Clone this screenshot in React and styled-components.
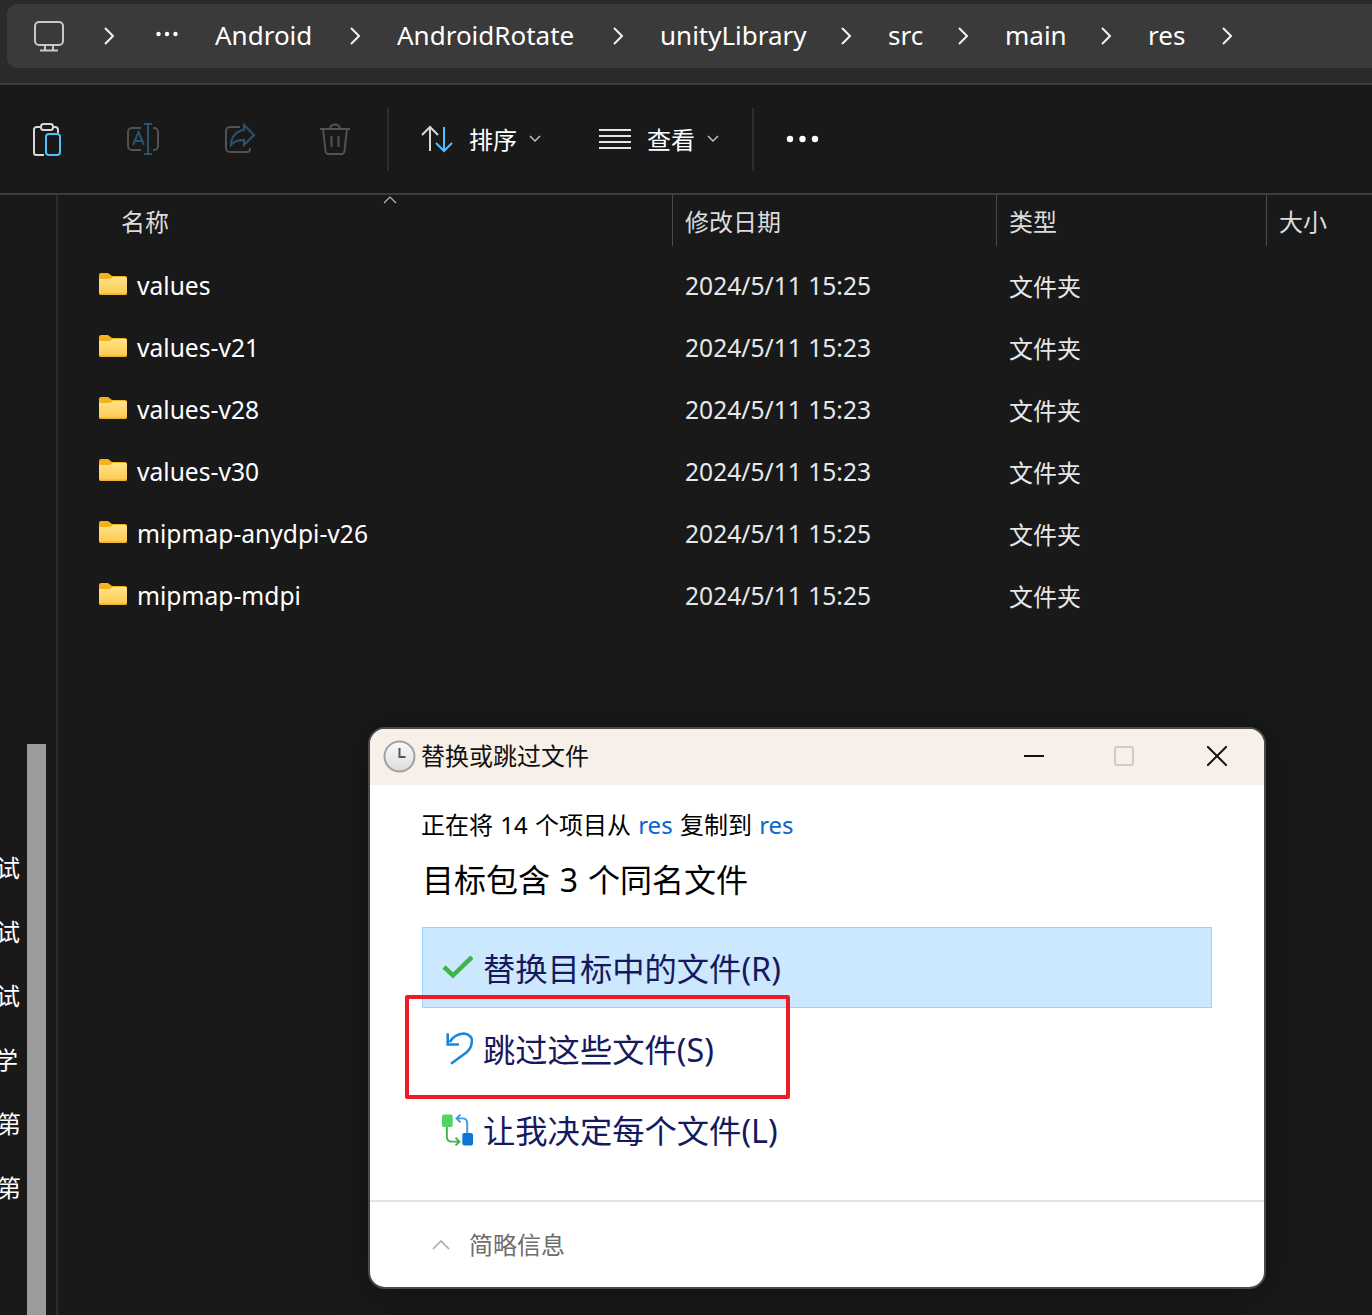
import React from 'react'
import styled, { createGlobalStyle } from 'styled-components'

const GlobalStyle = createGlobalStyle`
  html, body { margin: 0; padding: 0; background: #191919; }
  body { font-family: "Noto Sans", "Noto Sans CJK SC", sans-serif; }
`

const Page = styled.div`
  position: relative;
  width: 1372px;
  height: 1315px;
  overflow: hidden;
  background: #191919;
  display: flex;
  flex-direction: column;
`

const TopBand = styled.div`
  height: 85px;
  box-sizing: border-box;
  padding: 4px 0 15px 7px;
  background: #2b2b2b;
  border-bottom: 2px solid #3c3c3c;
`

const Breadcrumb = styled.div`
  height: 64px;
  border-radius: 10px 0 0 10px;
  background: #3a3a3a;
  display: flex;
  align-items: center;
  padding-left: 26px;
  color: #fff;
  font-size: 26px;
  white-space: nowrap;
`

const MonitorIcon = styled.svg`
  margin-right: 39px;
`

const Dots = styled.svg`
  margin: -5px 37px 0 42px;
`

const Crumb = styled.span`
  width: ${p => p.$w}px;
  margin: 0 36px 2px ${p => (p.$first ? 0 : 37)}px;
  line-height: 62px;
`

const Toolbar = styled.div`
  height: 110px;
  flex: none;
  box-sizing: border-box;
  border-bottom: 2px solid #3c3c3c;
  display: flex;
  align-items: center;
  color: #fff;
  font-size: 24px;
`

const ToolIcon = styled.div`
  width: 96px;
  display: flex;
  justify-content: center;
  &:first-child { margin-left: -1px; }
`

const ToolSep = styled.div`
  width: 2px;
  height: 63px;
  margin: 0 32px 0 ${p => p.$left}px;
  background: #2e2e2e;
`

const ToolMenu = styled.div`
  display: flex;
  align-items: center;
  margin-right: ${p => p.$right}px;
`

const MenuLabel = styled.span`
  margin: 2px 12px 0 16px;
  line-height: 32px;
`

const Body = styled.div`
  flex: 1;
  display: flex;
  min-height: 0;
`

const Sidebar = styled.aside`
  position: relative;
  width: 56px;
  flex: none;
  border-right: 2px solid #2b2b2b;
  padding-top: 657px;
  color: #fff;
  font-size: 24px;
`

const SideLabel = styled.div`
  width: 20px;
  height: 64px;
  line-height: 32px;
  overflow: hidden;
  white-space: nowrap;
  text-indent: ${p => p.$indent}px;
`

const ScrollThumb = styled.div`
  position: absolute;
  left: 27px;
  top: 549px;
  bottom: 0;
  width: 19px;
  background: #9b9b9b;
`

const Files = styled.main`
  flex: 1;
  min-width: 0;
`

const HeaderRow = styled.div`
  position: relative;
  height: 51px;
  margin-bottom: 8px;
  display: grid;
  grid-template-columns: 615px 324px 270px 1fr;
`

const HeaderCell = styled.div`
  height: 51px;
  box-sizing: border-box;
  padding-left: ${p => p.$pad}px;
  line-height: 54px;
  color: #dcdcdc;
  font-size: 24px;
  border-right: ${p => (p.$last ? 'none' : '1px solid #4a4a4a')};
`

const SortCaret = styled.svg`
  position: absolute;
  left: 325px;
  top: 0;
`

const FileRow = styled.div`
  height: 62px;
  display: grid;
  grid-template-columns: 615px 324px 1fr;
  align-items: center;
  font-size: 24.6px;
  color: #e8e8e8;
`

const NameCell = styled.div`
  display: flex;
  align-items: center;
  gap: 10px;
  padding-left: 41px;
  color: #fff;
`

const FolderIcon = styled.svg`
  margin-bottom: 2px;
`

const DateCell = styled.div`
  padding-left: 12px;
`

const TypeCell = styled.div`
  padding-left: 12px;
  font-size: 24px;
`

const Dialog = styled.section`
  position: absolute;
  left: 368px;
  top: 727px;
  width: 898px;
  height: 562px;
  box-sizing: border-box;
  border: 2px solid #4a4a4a;
  border-radius: 17px;
  background: #fff;
  overflow: hidden;
  display: flex;
  flex-direction: column;
  color: #000;
  box-shadow: 0 4px 40px rgba(0, 0, 0, 0.35);
`

const TitleBar = styled.header`
  height: 56px;
  flex: none;
  box-sizing: border-box;
  display: flex;
  align-items: center;
  padding: 0 1px 2px 13px;
  background: #f7f0e9;
  font-size: 24px;
  color: #111;
`

const TitleText = styled.span`
  margin: 0 0 3px 5px;
  flex: 1;
`

const WinButton = styled.div`
  width: ${p => p.$w}px;
  display: flex;
  justify-content: center;
`

const Content = styled.div`
  flex: 1;
  padding: 21px 52px 0 52px;
`

const Progress = styled.div`
  margin-left: -1px;
  font-size: 24px;
  line-height: 38px;
  word-spacing: 1px;
`

const Link = styled.span`
  color: #0a66c8;
`

const Heading = styled.h1`
  margin: 14px 0 25px 0;
  font-size: 32px;
  font-weight: 400;
  line-height: 44px;
  word-spacing: 1.5px;
`

const Option = styled.div`
  height: 81px;
  box-sizing: border-box;
  display: flex;
  align-items: center;
  gap: 10px;
  padding-left: 19px;
  font-size: 32.3px;
  color: #17195e;
  background: ${p => (p.$active ? '#cce8ff' : 'transparent')};
  border: 1px solid ${p => (p.$active ? '#99d1ff' : 'transparent')};
`

const OptionText = styled.span`
  margin-bottom: 2px;
`

const Footer = styled.footer`
  height: 87px;
  flex: none;
  box-sizing: border-box;
  border-top: 2px solid #e3e3e3;
  display: flex;
  align-items: center;
  gap: 19px;
  padding-left: 62px;
  font-size: 24px;
  color: #6d6d6d;
`

const FooterText = styled.span`
  margin-bottom: 3px;
`

const Highlight = styled.div`
  position: absolute;
  left: 405px;
  top: 995px;
  width: 385px;
  height: 104px;
  box-sizing: border-box;
  border: 4px solid #ed1c24;
  border-radius: 2px;
`

const Chevron = () => (
  <svg width="10" height="18" viewBox="0 0 10 18" fill="none" stroke="#f2f2f2" strokeWidth="2">
    <path d="M1 1l8 8-8 8" />
  </svg>
)

const Caret = ({ color = '#c8c8c8' }) => (
  <svg width="12" height="8" viewBox="0 0 12 8" fill="none" stroke={color} strokeWidth="1.4">
    <path d="M1 1l5 5 5-5" />
  </svg>
)

const Folder = ({ id }) => (
  <FolderIcon width="28" height="22" viewBox="0 0 28 22">
    <defs>
      <linearGradient id={id} x1="0" y1="0" x2="0" y2="1">
        <stop offset="0" stopColor="#ffe38c" />
        <stop offset="1" stopColor="#fcca4e" />
      </linearGradient>
    </defs>
    <path d="M0 2a2 2 0 0 1 2-2h7l4 3h13a2 2 0 0 1 2 2v3H0z" fill="#f5b21b" />
    <path d="M0 6h11l3-2h12a2 2 0 0 1 2 2v14a2 2 0 0 1-2 2H2a2 2 0 0 1-2-2z" fill={`url(#${id})`} />
    <path d="M0 20.500h28a2 2 0 0 1-2 1.500H2a2 2 0 0 1-2-1.500z" fill="#eeb22e" />
  </FolderIcon>
)

const files = [
  { name: 'values', date: '2024/5/11 15:25' },
  { name: 'values-v21', date: '2024/5/11 15:23' },
  { name: 'values-v28', date: '2024/5/11 15:23' },
  { name: 'values-v30', date: '2024/5/11 15:23' },
  { name: 'mipmap-anydpi-v26', date: '2024/5/11 15:25' },
  { name: 'mipmap-mdpi', date: '2024/5/11 15:25' },
]

const crumbs = [
  { label: 'Android', width: 99 },
  { label: 'AndroidRotate', width: 180 },
  { label: 'unityLibrary', width: 145 },
  { label: 'src', width: 34 },
  { label: 'main', width: 60 },
  { label: 'res', width: 38 },
]

export default function App() {
  return (
    <Page>
      <GlobalStyle />
      <TopBand>
        <Breadcrumb>
          <MonitorIcon width="32" height="32" viewBox="0 0 32 32" fill="none" stroke="#c8c8c8" strokeWidth="2">
            <rect x="2" y="2" width="28" height="23" rx="4" />
            <path d="M12 25v5M20 25v5M7 30.500h18" />
          </MonitorIcon>
          <Chevron />
          <Dots width="22" height="6" viewBox="0 0 22 6" fill="#fff">
            <circle cx="2.500" cy="3" r="2.200" />
            <circle cx="11" cy="3" r="2.200" />
            <circle cx="19.500" cy="3" r="2.200" />
          </Dots>
          {crumbs.map((crumb, i) => (
            <React.Fragment key={crumb.label}>
              <Crumb $first={i === 0} $w={crumb.width}>{crumb.label}</Crumb>
              <Chevron />
            </React.Fragment>
          ))}
        </Breadcrumb>
      </TopBand>

      <Toolbar>
        <ToolIcon>
          <svg width="32" height="34" viewBox="0 0 32 34" fill="none" strokeWidth="2">
            <path d="M10 5H5.500A2.500 2.500 0 0 0 3 7.500v23A2.500 2.500 0 0 0 5.500 33H13M22 5h2a3 3 0 0 1 3 3v3" stroke="#d8d8d8" />
            <rect x="10" y="2" width="12" height="6" rx="2.500" stroke="#d8d8d8" />
            <rect x="15" y="12" width="14" height="21" rx="3" stroke="#4cc2ff" />
          </svg>
        </ToolIcon>
        <ToolIcon>
          <svg width="32" height="32" viewBox="0 0 32 32" fill="none" strokeWidth="2">
            <path d="M14 5H5a4 4 0 0 0-4 4v14a4 4 0 0 0 4 4h9M26 5h1a4 4 0 0 1 4 4v14a4 4 0 0 1-4 4h-1" stroke="#525252" />
            <path d="M17 1h8M21 1v30M17 31h8" stroke="#28546f" />
            <path d="M6 22L11.500 9 17 22M8 18h7" stroke="#28546f" />
          </svg>
        </ToolIcon>
        <ToolIcon>
          <svg width="32" height="32" viewBox="0 0 32 32" fill="none" strokeWidth="2">
            <path d="M17 4H7a4 4 0 0 0-4 4v17a4 4 0 0 0 4 4h17a3 3 0 0 0 3-3v-1" stroke="#525252" />
            <path d="M21 2l10 10-10 10v-5c-6 0-10 1-13 5 0-8 5-14 13-15z" stroke="#28546f" />
          </svg>
        </ToolIcon>
        <ToolIcon>
          <svg width="32" height="32" viewBox="0 0 32 32" fill="none" stroke="#525252" strokeWidth="2">
            <path d="M1 6h30M11 6c0-6 10-6 10 0M4 6l2.500 22a3 3 0 0 0 3 3h13a3 3 0 0 0 3-3L28 6M12.500 13v11M19.500 13v11" />
          </svg>
        </ToolIcon>
        <ToolSep $left={4} />
        <ToolMenu $right={58}>
          <svg width="32" height="28" viewBox="0 0 32 28" fill="none" strokeWidth="2">
            <path d="M9 26V2M1 10l8-8 8 8" stroke="#d8d8d8" />
            <path d="M23 2v24M15 18l8 8 8-8" stroke="#4cc2ff" />
          </svg>
          <MenuLabel>排序</MenuLabel>
          <Caret />
        </ToolMenu>
        <ToolMenu $right={33}>
          <svg width="32" height="22" viewBox="0 0 32 22" fill="none" stroke="#e4e4e4" strokeWidth="2">
            <path d="M0 2h32M0 8h32M0 14h32M0 20h32" />
          </svg>
          <MenuLabel>查看</MenuLabel>
          <Caret />
        </ToolMenu>
        <ToolSep $left={0} />
        <svg width="33" height="8" viewBox="0 0 33 8" fill="#fff">
          <circle cx="4" cy="4" r="3.200" />
          <circle cx="16.500" cy="4" r="3.200" />
          <circle cx="29" cy="4" r="3.200" />
        </svg>
      </Toolbar>

      <Body>
        <Sidebar>
          <SideLabel $indent={-4}>试</SideLabel>
          <SideLabel $indent={-4}>试</SideLabel>
          <SideLabel $indent={-4}>试</SideLabel>
          <SideLabel $indent={-6}>学习</SideLabel>
          <SideLabel $indent={-3}>第一</SideLabel>
          <SideLabel $indent={-3}>第二</SideLabel>
          <ScrollThumb />
        </Sidebar>
        <Files>
          <HeaderRow>
            <HeaderCell $pad={63}>名称</HeaderCell>
            <HeaderCell $pad={12}>修改日期</HeaderCell>
            <HeaderCell $pad={12}>类型</HeaderCell>
            <HeaderCell $pad={12} $last>大小</HeaderCell>
            <SortCaret width="14" height="9" viewBox="0 0 14 9" fill="none" stroke="#b8b8b8" strokeWidth="1.200">
              <path d="M1 8l6-6 6 6" />
            </SortCaret>
          </HeaderRow>
          {files.map(file => (
            <FileRow key={file.name}>
              <NameCell>
                <Folder id={`folder-${file.name}`} />
                <span>{file.name}</span>
              </NameCell>
              <DateCell>{file.date}</DateCell>
              <TypeCell>文件夹</TypeCell>
            </FileRow>
          ))}
        </Files>
      </Body>

      <Dialog>
        <TitleBar>
          <svg width="33" height="33" viewBox="0 0 33 33">
            <defs>
              <linearGradient id="clockFace" x1="0" y1="0" x2="0" y2="1">
                <stop offset="0" stopColor="#fafafa" />
                <stop offset="1" stopColor="#dcdcdc" />
              </linearGradient>
            </defs>
            <circle cx="16.500" cy="16.500" r="15" fill="url(#clockFace)" stroke="#a0a0a0" strokeWidth="2" />
            <path d="M16.500 8v9h6" fill="none" stroke="#555" strokeWidth="2" />
          </svg>
          <TitleText>替换或跳过文件</TitleText>
          <WinButton $w={86}>
            <svg width="20" height="2" viewBox="0 0 20 2"><path d="M0 1h20" stroke="#111" strokeWidth="2" /></svg>
          </WinButton>
          <WinButton $w={94}>
            <svg width="20" height="20" viewBox="0 0 20 20" fill="none"><rect x="1" y="1" width="18" height="18" rx="2" stroke="#cdcbc5" strokeWidth="2" /></svg>
          </WinButton>
          <WinButton $w={92}>
            <svg width="20" height="20" viewBox="0 0 20 20" fill="none" stroke="#111" strokeWidth="2"><path d="M0 0l20 20M20 0L0 20" /></svg>
          </WinButton>
        </TitleBar>
        <Content>
          <Progress>正在将 14 个项目从 <Link>res</Link> 复制到 <Link>res</Link></Progress>
          <Heading>目标包含 3 个同名文件</Heading>
          <Option $active>
            <svg width="31" height="24" viewBox="0 0 31 24" fill="none">
              <path d="M2 11l9 8.500L30 1" stroke="#3cb54a" strokeWidth="4.500" />
            </svg>
            <OptionText>替换目标中的文件(R)</OptionText>
          </Option>
          <Option>
            <svg width="31" height="34" viewBox="0 0 31 34" fill="none" stroke="#1b87d6" strokeWidth="2.600">
              <path d="M5.700 1.200V12.500H17M7.700 10.200C10 6 14 2 22 1.500C27 2 31 6 29.700 10.200C29.700 14 28 17 25 20L9 31.800" />
            </svg>
            <OptionText>跳过这些文件(S)</OptionText>
          </Option>
          <Option>
            <svg width="31" height="32" viewBox="0 0 32 32" fill="none">
              <rect x="0" y="0" width="11" height="13" rx="2" fill="#4fd364" />
              <rect x="21" y="19" width="11" height="13" rx="2" fill="#0a78d4" />
              <path d="M5 13v10c0 3 2 5 5 5h8M14 24l4 4-4 4" stroke="#3cb54a" strokeWidth="2" />
              <path d="M26 19V9c0-3-2-5-5-5h-6M19 0l-4 4 4 4" stroke="#3aa0e8" strokeWidth="2" />
            </svg>
            <OptionText>让我决定每个文件(L)</OptionText>
          </Option>
        </Content>
        <Footer>
          <svg width="18" height="10" viewBox="0 0 18 10" fill="none" stroke="#a8a8a8" strokeWidth="1.600"><path d="M1 9l8-8 8 8" /></svg>
          <FooterText>简略信息</FooterText>
        </Footer>
      </Dialog>
      <Highlight />
    </Page>
  )
}
